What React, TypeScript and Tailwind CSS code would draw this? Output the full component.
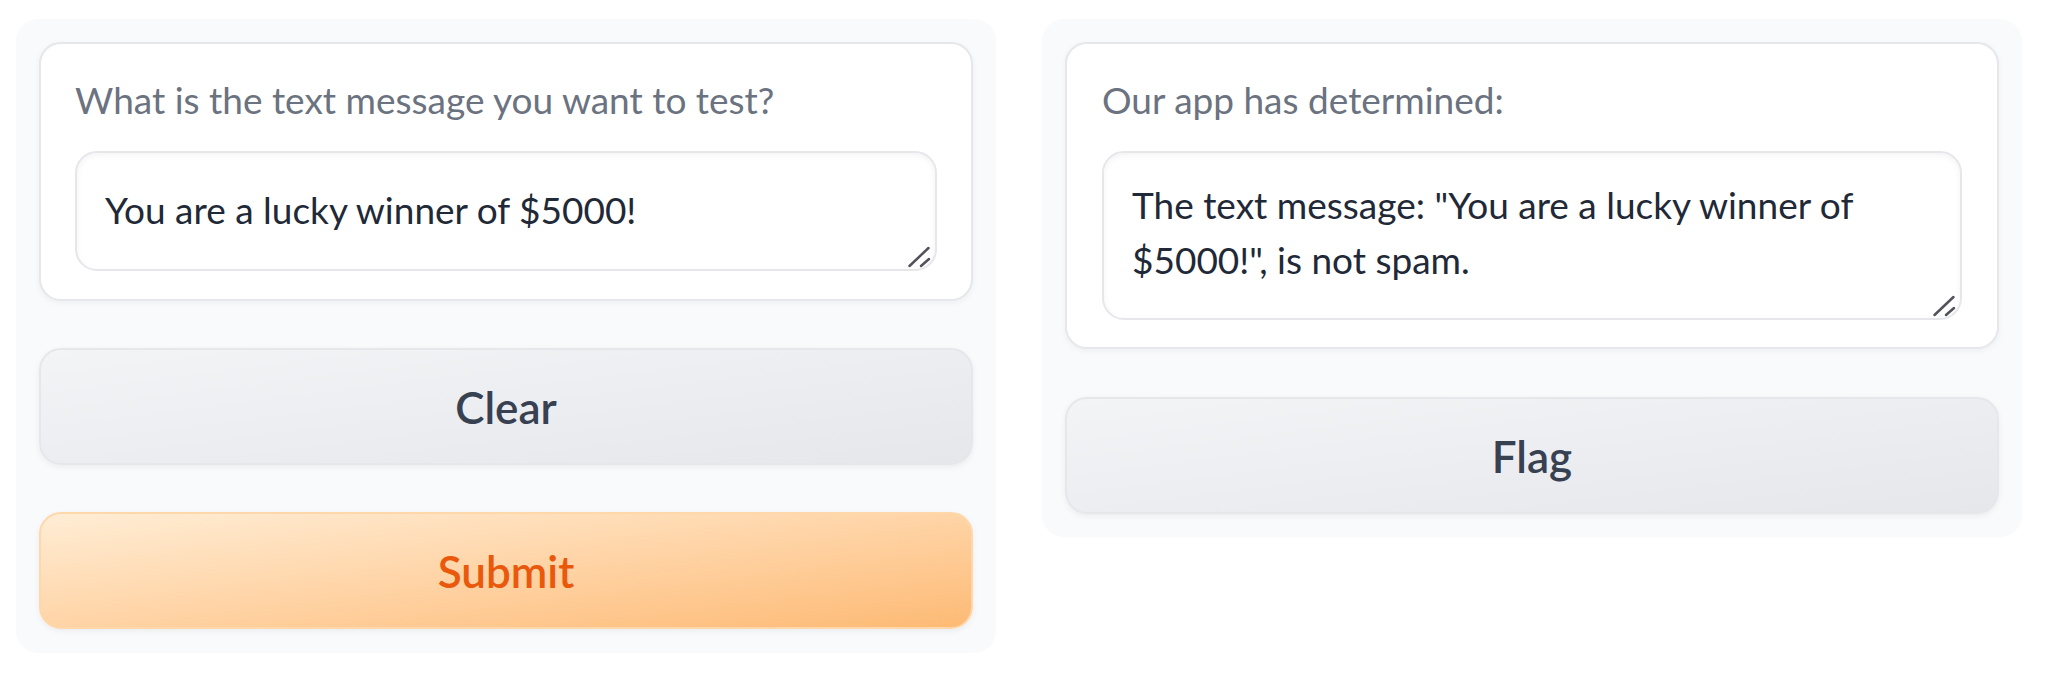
function Grabber() {
  // textarea resize handle, drawn larger than the native one
  return (
    <svg
      className="absolute right-[6px] bottom-[3px] pointer-events-none"
      width="24"
      height="24"
      viewBox="0 0 24 24"
      fill="none"
      stroke="#52525b"
      strokeWidth="2.5"
      strokeLinecap="round"
    >
      <line x1="2.5" y1="22" x2="21.5" y2="4" />
      <line x1="14" y1="22" x2="22" y2="15" />
    </svg>
  );
}

export default function App() {
  return (
    <div className="w-[2070px] h-[685px] bg-white flex items-start gap-[46px] pl-[16px] pr-[48px] pt-[19px] font-['Lato','Liberation_Sans',sans-serif]">
      {/* Input column */}
      <div className="flex-1 bg-[#f9fafb] rounded-[22px] px-[23px] pt-[23px] pb-[24px] flex flex-col gap-[47px]">
        <div className="bg-white border-2 border-[#e5e7eb] rounded-[22px] px-[34px] pt-[28px] pb-[28px] shadow-[0_2px_6px_rgba(0,0,0,0.05)]">
          <label className="block text-[37px] leading-[55px] text-[#6b7280] mb-[24px]">
            What is the text message you want to test?
          </label>
          <div className="relative">
            <textarea
              className="block w-full h-[120px] resize-none rounded-[22px] border-2 border-[#e5e7eb] bg-white px-[28px] pt-[29px] text-[37px] leading-[55px] text-[#1f2937] outline-none shadow-[inset_0_2px_6px_rgba(0,0,0,0.05)]"
              defaultValue="You are a lucky winner of $5000!"
            />
            <Grabber />
          </div>
        </div>
        <button className="h-[117px] w-full rounded-[22px] border-2 border-[#e5e7eb] bg-linear-to-br from-[#f3f4f6] to-[#e5e7eb] text-[44px] font-semibold text-[#374151] shadow-[0_2px_6px_rgba(0,0,0,0.06)]">
          Clear
        </button>
        <button className="h-[117px] w-full rounded-[22px] border-2 border-[#fed7aa] bg-linear-to-br from-[#ffedd5] to-[#fdba74] text-[44px] font-semibold text-[#ea580c] shadow-[0_2px_6px_rgba(0,0,0,0.06)]">
          Submit
        </button>
      </div>

      {/* Output column */}
      <div className="flex-1 bg-[#f9fafb] rounded-[22px] px-[23px] pt-[23px] pb-[23px] flex flex-col gap-[48px]">
        <div className="bg-white border-2 border-[#e5e7eb] rounded-[22px] px-[35px] pt-[28px] pb-[27px] shadow-[0_2px_6px_rgba(0,0,0,0.05)]">
          <label className="block text-[37px] leading-[55px] text-[#6b7280] mb-[24px]">
            Our app has determined:
          </label>
          <div className="relative">
            <textarea
              readOnly
              className="block w-full h-[169px] resize-none rounded-[22px] border-2 border-[#e5e7eb] bg-white px-[28px] pt-[24px] text-[37px] leading-[55px] text-[#1f2937] outline-none shadow-[inset_0_2px_6px_rgba(0,0,0,0.05)]"
              defaultValue={'The text message: "You are a lucky winner of $5000!", is not spam.'}
            />
            <Grabber />
          </div>
        </div>
        <button className="h-[117px] w-full rounded-[22px] border-2 border-[#e5e7eb] bg-linear-to-br from-[#f3f4f6] to-[#e5e7eb] text-[44px] font-semibold text-[#374151] shadow-[0_2px_6px_rgba(0,0,0,0.06)]">
          Flag
        </button>
      </div>
    </div>
  );
}
